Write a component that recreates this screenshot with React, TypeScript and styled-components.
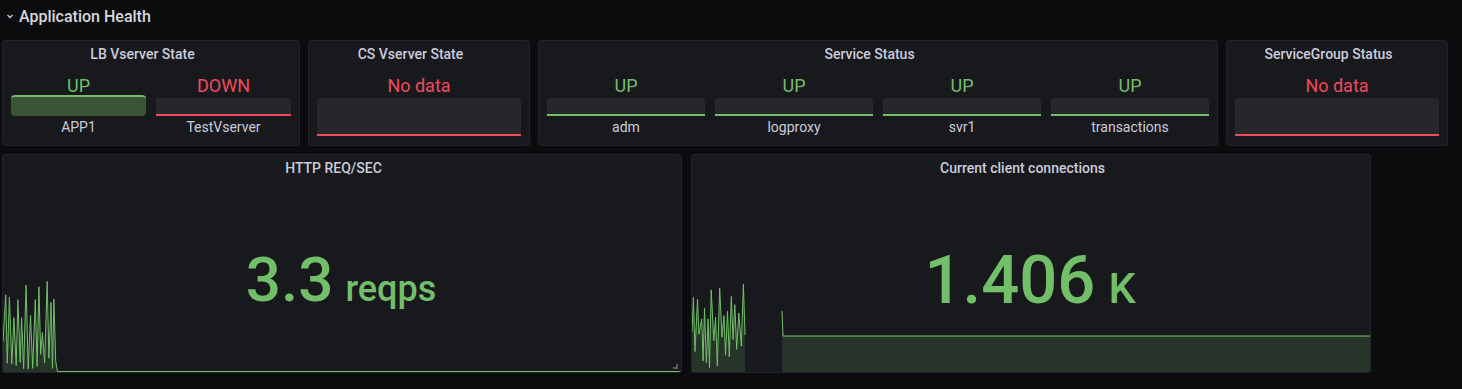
import React from "react";
import styled, { createGlobalStyle } from "styled-components";

const GREEN = "#73bf69";
const RED = "#f2495c";
const TEXT = "#ccccdc";

const GlobalStyle = createGlobalStyle`
  html, body { margin: 0; padding: 0; background: #0b0c0e; }
  body { font-family: Roboto, "Liberation Sans", sans-serif; color: ${TEXT}; }
  * { box-sizing: border-box; }
`;

const Page = styled.div`
  width: 1462px;
  height: 389px;
  background: #0b0c0e;
  overflow: hidden;
`;

const RowHeader = styled.div`
  display: flex;
  align-items: center;
  height: 32px;
  padding-left: 5px;
  gap: 4px;
  font-size: 16px;
  font-weight: 500;
  color: #d8d9da;
`;

const TopRow = styled.div`
  display: grid;
  grid-template-columns: 298px 222px 680px 222px;
  column-gap: 8px;
  height: 106px;
  margin-top: 8px;
  padding-left: 2px;
`;

const BottomRow = styled.div`
  display: grid;
  grid-template-columns: 680px 680px;
  column-gap: 9px;
  height: 219px;
  margin-top: 8px;
  padding-left: 2px;
`;

const Panel = styled.div`
  position: relative;
  display: flex;
  flex-direction: column;
  background: #17191d;
  border: 1px solid #222429;
  border-radius: 3px;
  overflow: hidden;
`;

const PanelTitle = styled.div`
  height: 26px;
  line-height: 26px;
  flex: none;
  text-align: center;
  padding-right: 17px;
  font-size: 14px;
  font-weight: 500;
  color: ${TEXT};
  white-space: nowrap;
`;

const StatGrid = styled.div<{ $cols: number }>`
  display: grid;
  grid-template-columns: repeat(${(p) => p.$cols}, 1fr);
  column-gap: 10px;
  padding: 0 8px;
  margin-top: 9px;
`;

const StatCol = styled.div`
  display: flex;
  flex-direction: column;
`;

const StatValue = styled.div<{ $color: string }>`
  font-size: 18px;
  line-height: 20px;
  height: 22px;
  padding-bottom: 2px;
  text-align: center;
  color: ${(p) => p.$color};
`;

const StatBar = styled.div<{ $color: string; $filled?: boolean }>`
  height: ${(p) => (p.$filled ? "21px" : "18px")};
  margin-top: ${(p) => (p.$filled ? "-3px" : "0")};
  background: ${(p) => (p.$filled ? "#3a5535" : "#25272b")};
  border-radius: ${(p) => (p.$filled ? "4px" : "3px 3px 0 0")};
  border-top: ${(p) => (p.$filled ? `2px solid ${p.$color}` : "none")};
  border-bottom: ${(p) => (p.$filled ? "none" : `2px solid ${p.$color}`)};
`;

const NoDataBox = styled.div`
  height: 38px;
  background: #25272b;
  border-radius: 3px 3px 0 0;
  border-bottom: 2px solid ${RED};
`;

const StatLabel = styled.div`
  font-size: 14px;
  line-height: 20px;
  margin-top: 1px;
  text-align: center;
  color: ${TEXT};
`;

const BigBody = styled.div`
  flex: 1;
  display: grid;
  grid-template-columns: 100%;
  grid-template-rows: 100%;
`;

const Spark = styled.svg`
  grid-area: 1 / 1;
  align-self: end;
  display: block;
  width: 678px;
  height: 96px;
`;

const BigValue = styled.div<{ $size: number; $top: number }>`
  grid-area: 1 / 1;
  align-self: start;
  justify-self: center;
  margin-top: ${(p) => p.$top}px;
  margin-right: 2px;
  font-size: ${(p) => p.$size}px;
  line-height: 1;
  font-weight: 500;
  color: ${GREEN};
  white-space: nowrap;
  position: relative;
  z-index: 1;
`;

const Unit = styled.span<{ $size: number; $gap: number }>`
  font-size: ${(p) => p.$size}px;
  margin-left: ${(p) => p.$gap}px;
`;

const ResizeHandle = styled.div`
  position: absolute;
  right: 3px;
  bottom: 3px;
  width: 5px;
  height: 5px;
  border-right: 2px solid #5a5c63;
  border-bottom: 2px solid #5a5c63;
`;

function rng(seed: number) {
  let s = seed;
  return () => {
    s = (s * 16807) % 2147483647;
    return (s - 1) / 2147483646;
  };
}

type Pt = [number, number];

function spikes(seed: number, x0: number, x1: number, hi: [number, number], lo: [number, number]): Pt[] {
  const r = rng(seed);
  const pts: Pt[] = [];
  let up = false;
  for (let x = x0; x <= x1; x += 1.3 + r() * 1.5) {
    const range = up ? hi : lo;
    pts.push([x, range[0] + r() * (range[1] - range[0])]);
    up = !up;
  }
  return pts;
}

function linePath(pts: Pt[]) {
  return pts.map((p, i) => `${i ? "L" : "M"}${p[0].toFixed(1)} ${p[1].toFixed(1)}`).join(" ");
}

function fillPath(pts: Pt[], bottom: number) {
  const first = pts[0];
  const last = pts[pts.length - 1];
  return `${linePath(pts)} L${last[0].toFixed(1)} ${bottom} L${first[0].toFixed(1)} ${bottom} Z`;
}

const httpPts: Pt[] = [
  ...spikes(7, 0, 54, [2, 60], [66, 95]),
  [54.5, 95.5],
  [678, 95.5],
];

const connA: Pt[] = spikes(31, 0, 53, [2, 48], [56, 94]);
const connB: Pt[] = [
  [90, 35],
  [91, 60],
  [678, 60],
];

const FILL = "rgba(115,191,105,0.17)";

function Sparkline({ segments }: { segments: Pt[][] }) {
  return (
    <Spark viewBox="0 0 678 96" preserveAspectRatio="none">
      {segments.map((s, i) => (
        <g key={i}>
          <path d={fillPath(s, 96)} fill={FILL} />
          <path d={linePath(s)} fill="none" stroke={GREEN} strokeWidth={1} />
        </g>
      ))}
    </Spark>
  );
}

function Chevron() {
  return (
    <svg width="10" height="10" viewBox="0 0 10 10">
      <polyline points="2.5,4 5,6.5 7.5,4" fill="none" stroke={TEXT} strokeWidth="1.3" />
    </svg>
  );
}

type Item = { value: string; label: string; color: string; filled?: boolean };

function StatPanel({ title, items }: { title: string; items: Item[] }) {
  return (
    <Panel>
      <PanelTitle>{title}</PanelTitle>
      <StatGrid $cols={items.length}>
        {items.map((it) => (
          <StatCol key={it.label}>
            <StatValue $color={it.color}>{it.value}</StatValue>
            <StatBar $color={it.color} $filled={it.filled} />
            <StatLabel>{it.label}</StatLabel>
          </StatCol>
        ))}
      </StatGrid>
    </Panel>
  );
}

function NoDataPanel({ title }: { title: string }) {
  return (
    <Panel>
      <PanelTitle>{title}</PanelTitle>
      <StatGrid $cols={1}>
        <StatCol>
          <StatValue $color={RED}>No data</StatValue>
          <NoDataBox />
        </StatCol>
      </StatGrid>
    </Panel>
  );
}

export default function App() {
  return (
    <Page>
      <GlobalStyle />
      <RowHeader>
        <Chevron />
        <span>Application Health</span>
      </RowHeader>
      <TopRow>
        <StatPanel
          title="LB Vserver State"
          items={[
            { value: "UP", label: "APP1", color: GREEN, filled: true },
            { value: "DOWN", label: "TestVserver", color: RED },
          ]}
        />
        <NoDataPanel title="CS Vserver State" />
        <StatPanel
          title="Service Status"
          items={[
            { value: "UP", label: "adm", color: GREEN },
            { value: "UP", label: "logproxy", color: GREEN },
            { value: "UP", label: "svr1", color: GREEN },
            { value: "UP", label: "transactions", color: GREEN },
          ]}
        />
        <NoDataPanel title="ServiceGroup Status" />
      </TopRow>
      <BottomRow>
        <Panel>
          <PanelTitle>HTTP REQ/SEC</PanelTitle>
          <BigBody>
            <Sparkline segments={[httpPts]} />
            <BigValue $size={62} $top={68}>
              3.3<Unit $size={36} $gap={12}>reqps</Unit>
            </BigValue>
          </BigBody>
          <ResizeHandle />
        </Panel>
        <Panel>
          <PanelTitle>Current client connections</PanelTitle>
          <BigBody>
            <Sparkline segments={[connA, connB]} />
            <BigValue $size={67} $top={66}>
              1.406<Unit $size={43} $gap={13}>K</Unit>
            </BigValue>
          </BigBody>
        </Panel>
      </BottomRow>
    </Page>
  );
}
